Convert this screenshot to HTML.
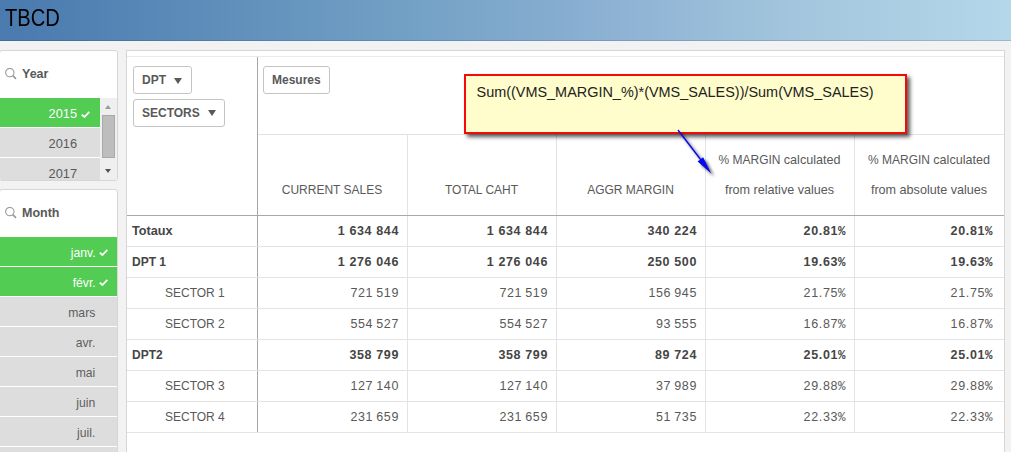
<!DOCTYPE html>
<html><head><meta charset="utf-8"><style>
*{box-sizing:border-box;margin:0;padding:0}
html,body{width:1011px;height:452px;overflow:hidden;background:#f2f2f2;font-family:"Liberation Sans",sans-serif;position:relative}
.a{position:absolute}
#hdr{left:0;top:0;width:1011px;height:41px;background:linear-gradient(to right,#4a7aae 0%,#5383b4 10%,#72a0c5 40%,#8cb1d3 60%,#a5c7de 80%,#b5d7ea 100%);border-bottom:1px solid rgba(20,50,90,0.18)}
#hdr span{position:absolute;left:5px;top:4px;font-size:23px;color:#000;line-height:28px;transform:scaleX(0.875);transform-origin:0 0}
.panel{background:#fff;border:1px solid #d6d6d6;border-radius:3px;overflow:hidden}
.ph .t{position:absolute;left:22px;font-weight:bold;font-size:12.5px;color:#595959;line-height:14px}
.srch{position:absolute;left:5px}
.row{position:absolute;left:0;height:29px;text-align:right;font-size:12.2px;color:#595959;line-height:32.2px;white-space:nowrap}
.sel{background:#52cc52;color:#fff}
.alt{background:#dddddd}
.chk{display:inline-block;width:9px;height:7px;margin-left:3.3px;vertical-align:1px}
.mono{font-family:"Liberation Mono",monospace}
.ln{position:absolute;background:#e3e3e3}
.btn{position:absolute;border:1px solid #c4c4c4;border-radius:3px;background:#fff;font-weight:bold;font-size:12px;color:#595959;line-height:14px;white-space:nowrap}
.tri{position:absolute;width:0;height:0;border-left:4.5px solid transparent;border-right:4.5px solid transparent;border-top:6px solid #595959}
.hd{position:absolute;font-size:12px;color:#595959;line-height:14px;white-space:nowrap;text-align:center}
.dim{position:absolute;font-size:12px;color:#595959;line-height:14px;white-space:nowrap}
.num{position:absolute;font-size:12.5px;letter-spacing:0.65px;color:#595959;line-height:14px;white-space:nowrap;text-align:right}
.pc{font-family:"Liberation Mono",monospace;letter-spacing:-0.6px}
.yr{font-size:12.8px;line-height:32px}
.yr .chk{vertical-align:0px;margin-left:4px}
.b{font-weight:bold;color:#454545}
i.ns{display:inline-block;width:3px}
.b i.ns{width:4px}
.lc{font-size:12.6px}
.dim .lc{font-size:12.7px}
</style></head><body>
<div id="hdr" class="a"><span>TBCD</span></div>
<div class="a panel" style="left:-1px;top:50px;width:119px;height:131px">
<div class="ph"><svg class="srch" style="top:17px" width="14" height="13" viewBox="0 0 14 13"><circle cx="4.8" cy="4.6" r="4.2" fill="none" stroke="#9a9a9a" stroke-width="1.1"/><line x1="7.8" y1="7.7" x2="11" y2="10.8" stroke="#9a9a9a" stroke-width="1.7"/></svg><div class="t" style="top:16px">Year</div></div>
<div class="row sel yr" style="top:47px;width:100px;padding-right:10px">2015<svg class="chk" viewBox="0 0 9 7"><path d="M0.8 3.6 L3.4 6 L8.3 0.9" fill="none" stroke="#fff" stroke-width="1.8"/></svg></div>
<div class="row alt yr" style="top:77px;width:100px;padding-right:23px">2016</div>
<div class="row alt yr" style="top:107px;width:100px;padding-right:23px">2017</div>
<div class="a" style="left:100px;top:47px;width:18px;height:84px;background:#efefef"></div>
<div class="a" style="left:105px;top:54px;width:0;height:0;border-left:3.5px solid transparent;border-right:3.5px solid transparent;border-bottom:4px solid #9a9a9a"></div>
<div class="a" style="left:102px;top:64px;width:13px;height:43px;background:#bdbdbd;border:1px solid #a9a9a9"></div>
<div class="a" style="left:105px;top:118px;width:0;height:0;border-left:3.5px solid transparent;border-right:3.5px solid transparent;border-top:4px solid #555"></div>
</div>
<div class="a panel" style="left:-1px;top:189px;width:119px;height:300px">
<div class="ph"><svg class="srch" style="top:17px" width="14" height="13" viewBox="0 0 14 13"><circle cx="4.8" cy="4.6" r="4.2" fill="none" stroke="#9a9a9a" stroke-width="1.1"/><line x1="7.8" y1="7.7" x2="11" y2="10.8" stroke="#9a9a9a" stroke-width="1.7"/></svg><div class="t" style="top:16px">Month</div></div>
<div class="row sel" style="top:47px;width:118px;padding-right:10px">janv.<svg class="chk" viewBox="0 0 9 7"><path d="M0.8 3.6 L3.4 6 L8.3 0.9" fill="none" stroke="#fff" stroke-width="1.8"/></svg></div>
<div class="row sel" style="top:77px;width:118px;padding-right:10px">févr.<svg class="chk" viewBox="0 0 9 7"><path d="M0.8 3.6 L3.4 6 L8.3 0.9" fill="none" stroke="#fff" stroke-width="1.8"/></svg></div>
<div class="row alt" style="top:107px;width:118px;padding-right:22.7px;color:#5e5e5e">mars</div>
<div class="row alt" style="top:137px;width:118px;padding-right:22.7px;color:#5e5e5e">avr.</div>
<div class="row alt" style="top:167px;width:118px;padding-right:22.7px;color:#5e5e5e">mai</div>
<div class="row alt" style="top:197px;width:118px;padding-right:22.7px;color:#5e5e5e">juin</div>
<div class="row alt" style="top:227px;width:118px;padding-right:22.7px;color:#5e5e5e">juil.</div>
<div class="row alt" style="top:257px;width:118px;padding-right:22.7px;color:#5e5e5e">août</div>
</div>
<div class="a" style="left:126px;top:50px;width:879px;height:410px;background:#fff;border:1px solid #d6d6d6"></div>
<div class="ln" style="left:127px;top:56px;width:877px;height:1px;background:#ebebeb"></div>
<div class="ln" style="left:257px;top:57px;width:1px;height:376px;background:#a8a8a8"></div>
<div class="ln" style="left:258px;top:134px;width:746px;height:1px;background:#e3e3e3"></div>
<div class="ln" style="left:407px;top:135px;width:1px;height:298px;background:#e3e3e3"></div>
<div class="ln" style="left:556px;top:135px;width:1px;height:298px;background:#e3e3e3"></div>
<div class="ln" style="left:705px;top:135px;width:1px;height:298px;background:#e3e3e3"></div>
<div class="ln" style="left:854px;top:135px;width:1px;height:298px;background:#e3e3e3"></div>
<div class="ln" style="left:127px;top:215px;width:877px;height:1px;background:#a8a8a8"></div>
<div class="ln" style="left:127px;top:246px;width:877px;height:1px;background:#e3e3e3"></div>
<div class="ln" style="left:127px;top:277px;width:877px;height:1px;background:#e3e3e3"></div>
<div class="ln" style="left:127px;top:308px;width:877px;height:1px;background:#e3e3e3"></div>
<div class="ln" style="left:127px;top:339px;width:877px;height:1px;background:#e3e3e3"></div>
<div class="ln" style="left:127px;top:370px;width:877px;height:1px;background:#e3e3e3"></div>
<div class="ln" style="left:127px;top:401px;width:877px;height:1px;background:#e3e3e3"></div>
<div class="ln" style="left:127px;top:432px;width:877px;height:1px;background:#e3e3e3"></div>
<div class="btn" style="left:133px;top:66px;width:59px;height:28px"><span class="a" style="left:8px;top:6px">DPT</span></div>
<div class="tri" style="left:174px;top:77.5px"></div>
<div class="btn" style="left:133px;top:99px;width:92px;height:28px"><span class="a" style="left:8px;top:6px">SECTORS</span></div>
<div class="tri" style="left:207.5px;top:110px"></div>
<div class="btn" style="left:263px;top:66px;width:67px;height:28px"><span class="a" style="left:8px;top:6px">Mesures</span></div>
<div class="hd" style="left:257px;width:150px;top:183px">CURRENT SALES</div>
<div class="hd" style="left:407px;width:149px;top:183px">TOTAL CAHT</div>
<div class="hd" style="left:556px;width:149px;top:183px">AGGR MARGIN</div>
<div class="hd" style="left:705px;width:149px;top:153px">% MARGIN <span class="lc">calculated</span></div>
<div class="hd" style="left:705px;width:149px;top:183px"><span class="lc">from relative values</span></div>
<div class="hd" style="left:854px;width:150px;top:153px">% MARGIN <span class="lc">calculated</span></div>
<div class="hd" style="left:854px;width:150px;top:183px"><span class="lc">from absolute values</span></div>
<div class="dim b" style="left:132px;top:224px"><span class="lc">Totaux</span></div>
<div class="num b" style="right:612px;top:224.4px">1<i class="ns"></i>634<i class="ns"></i>844</div>
<div class="num b" style="right:463px;top:224.4px">1<i class="ns"></i>634<i class="ns"></i>844</div>
<div class="num b" style="right:314px;top:224.4px">340<i class="ns"></i>224</div>
<div class="num b" style="right:166px;top:224.4px">20.81<span class="pc">%</span></div>
<div class="num b" style="right:19px;top:224.4px">20.81<span class="pc">%</span></div>
<div class="dim b" style="left:132px;top:255px">DPT 1</div>
<div class="num b" style="right:612px;top:255.4px">1<i class="ns"></i>276<i class="ns"></i>046</div>
<div class="num b" style="right:463px;top:255.4px">1<i class="ns"></i>276<i class="ns"></i>046</div>
<div class="num b" style="right:314px;top:255.4px">250<i class="ns"></i>500</div>
<div class="num b" style="right:166px;top:255.4px">19.63<span class="pc">%</span></div>
<div class="num b" style="right:19px;top:255.4px">19.63<span class="pc">%</span></div>
<div class="dim" style="left:165px;top:286px">SECTOR 1</div>
<div class="num" style="right:612px;top:286.4px">721<i class="ns"></i>519</div>
<div class="num" style="right:463px;top:286.4px">721<i class="ns"></i>519</div>
<div class="num" style="right:314px;top:286.4px">156<i class="ns"></i>945</div>
<div class="num" style="right:166px;top:286.4px">21.75<span class="pc">%</span></div>
<div class="num" style="right:19px;top:286.4px">21.75<span class="pc">%</span></div>
<div class="dim" style="left:165px;top:317px">SECTOR 2</div>
<div class="num" style="right:612px;top:317.4px">554<i class="ns"></i>527</div>
<div class="num" style="right:463px;top:317.4px">554<i class="ns"></i>527</div>
<div class="num" style="right:314px;top:317.4px">93<i class="ns"></i>555</div>
<div class="num" style="right:166px;top:317.4px">16.87<span class="pc">%</span></div>
<div class="num" style="right:19px;top:317.4px">16.87<span class="pc">%</span></div>
<div class="dim b" style="left:132px;top:348px">DPT2</div>
<div class="num b" style="right:612px;top:348.4px">358<i class="ns"></i>799</div>
<div class="num b" style="right:463px;top:348.4px">358<i class="ns"></i>799</div>
<div class="num b" style="right:314px;top:348.4px">89<i class="ns"></i>724</div>
<div class="num b" style="right:166px;top:348.4px">25.01<span class="pc">%</span></div>
<div class="num b" style="right:19px;top:348.4px">25.01<span class="pc">%</span></div>
<div class="dim" style="left:165px;top:379px">SECTOR 3</div>
<div class="num" style="right:612px;top:379.4px">127<i class="ns"></i>140</div>
<div class="num" style="right:463px;top:379.4px">127<i class="ns"></i>140</div>
<div class="num" style="right:314px;top:379.4px">37<i class="ns"></i>989</div>
<div class="num" style="right:166px;top:379.4px">29.88<span class="pc">%</span></div>
<div class="num" style="right:19px;top:379.4px">29.88<span class="pc">%</span></div>
<div class="dim" style="left:165px;top:410px">SECTOR 4</div>
<div class="num" style="right:612px;top:410.4px">231<i class="ns"></i>659</div>
<div class="num" style="right:463px;top:410.4px">231<i class="ns"></i>659</div>
<div class="num" style="right:314px;top:410.4px">51<i class="ns"></i>735</div>
<div class="num" style="right:166px;top:410.4px">22.33<span class="pc">%</span></div>
<div class="num" style="right:19px;top:410.4px">22.33<span class="pc">%</span></div>
<div class="a" style="left:464px;top:74px;width:443px;height:60px;background:#fffdcc;border:2px solid #f50a0a;box-shadow:3px 3px 4px rgba(0,0,0,0.65)"></div>
<div class="a" style="left:476.5px;top:84px;font-size:14.45px;line-height:17px;color:#222;white-space:nowrap">Sum((VMS_MARGIN_%)*(VMS_SALES))/Sum(VMS_SALES)</div>
<svg class="a" style="left:0;top:0" width="1011" height="452" viewBox="0 0 1011 452">
<defs><filter id="sh" x="-50%" y="-50%" width="200%" height="200%"><feGaussianBlur stdDeviation="1.8"/></filter></defs>
<g transform="translate(3,3)" opacity="0.6" filter="url(#sh)"><line x1="678" y1="130" x2="701" y2="160" stroke="#000" stroke-width="1.6"/><path d="M711.3 173.5 L697.6 161.4 L703.1 157.2 Z" fill="#000"/></g>
<line x1="678" y1="130" x2="701" y2="160" stroke="#0808f0" stroke-width="1.4"/>
<path d="M711.3 173.5 L697.6 161.4 L703.1 157.2 Z" fill="#0808f0"/>
</svg>
</body></html>
